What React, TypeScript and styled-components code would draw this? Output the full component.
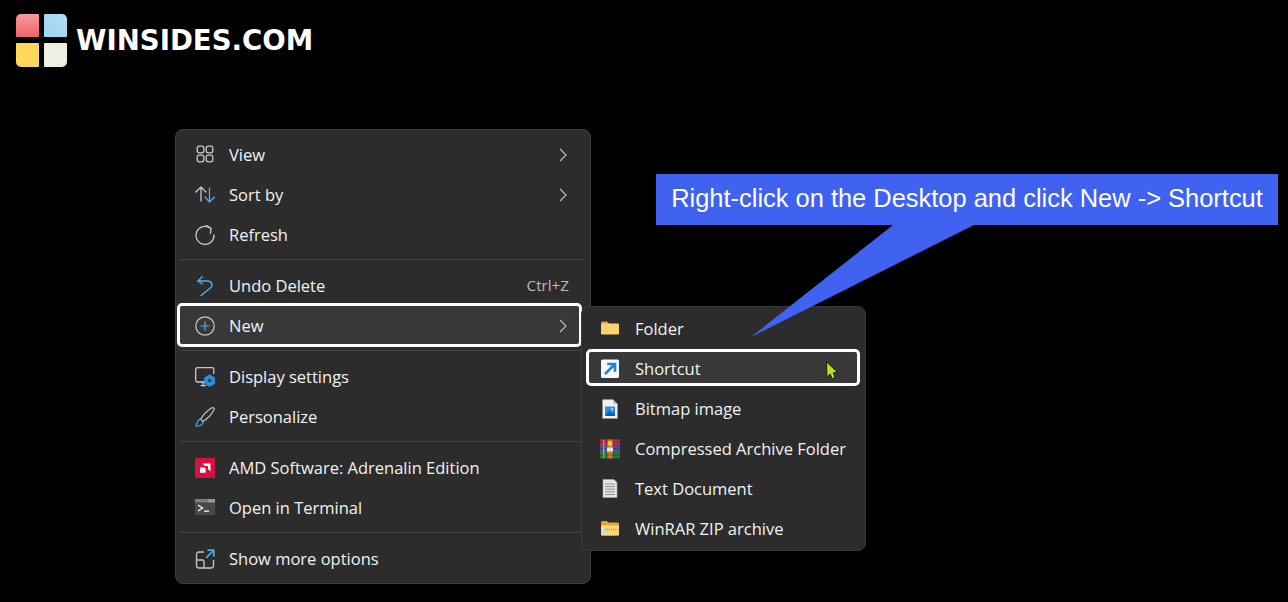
import React from 'react';
import styled, { createGlobalStyle } from 'styled-components';

const GlobalStyle = createGlobalStyle`
  html, body {
    margin: 0;
    background: #000;
  }
  * {
    box-sizing: border-box;
  }
`;

const GREY = '#c9c9c9';
const BLUE = '#4cb0e6';

const ViewIcon = () => (
  <svg width="20" height="20" viewBox="0 0 20 20" fill="none" stroke={GREY} strokeWidth="1.3">
    <rect x="2.2" y="1.2" width="6.6" height="6.6" rx="2" />
    <rect x="11.2" y="1.2" width="6.6" height="6.6" rx="2" />
    <rect x="2.2" y="10.2" width="6.6" height="6.6" rx="2" />
    <rect x="11.2" y="10.2" width="6.6" height="6.6" rx="2" />
  </svg>
);

const SortIcon = () => (
  <svg width="20" height="20" viewBox="0 0 20 20" fill="none" strokeWidth="1.3" strokeLinecap="round" strokeLinejoin="round">
    <path d="M0.8 7 L6 2 L11 7 M6 2 V16" stroke={GREY} />
    <path d="M10 12 L14.5 17 L19.5 12 M14.5 3 V17" stroke={BLUE} />
  </svg>
);

const RefreshIcon = () => (
  <svg width="20" height="20" viewBox="0 0 20 20" fill="none" stroke={GREY} strokeWidth="1.3" strokeLinecap="round" strokeLinejoin="round">
    <path d="M15.5 3.2 A9 9 0 1 0 19 10" />
    <path d="M11.5 0.6 L16 3.2 L15.5 8.3" stroke={GREY} />
  </svg>
);

const UndoIcon = () => (
  <svg width="20" height="20" viewBox="0 0 20 20" fill="none" stroke={BLUE} strokeWidth="1.4" strokeLinecap="round" strokeLinejoin="round">
    <path d="M7.2 0.8 L3 5 L7.5 8" />
    <path d="M3 5 H12.5 C16.5 5 18.5 9 15.5 12 L6 19.6" />
  </svg>
);

const NewIcon = () => (
  <svg width="20" height="20" viewBox="0 0 20 20" fill="none" strokeWidth="1.2" strokeLinecap="round">
    <circle cx="10" cy="10" r="9.2" stroke={GREY} />
    <path d="M10 5.8 V14.2 M5.8 10 H14.2" stroke={BLUE} />
  </svg>
);

const DisplayIcon = () => (
  <svg width="20" height="20" viewBox="0 0 20 20" fill="none">
    <path d="M11 15 H2.5 A1.8 1.8 0 0 1 0.7 13.2 V2.5 A1.8 1.8 0 0 1 2.5 0.7 H17 A1.8 1.8 0 0 1 18.8 2.5 V7" stroke={GREY} strokeWidth="1.3" />
    <path d="M6 18.6 H10.5 M8 15 V18.6" stroke={GREY} strokeWidth="1.3" strokeLinecap="round" />
    <circle cx="14.6" cy="13.6" r="3.9" stroke="#2a8fdc" strokeWidth="3.4" />
    <path d="M14.6 7.6 V19.6 M9.4 10.6 L19.8 16.6 M9.4 16.6 L19.8 10.6" stroke="#2a8fdc" strokeWidth="2" />
    <circle cx="14.6" cy="13.6" r="1.5" fill="#2c2c2c" />
  </svg>
);

const BrushIcon = () => (
  <svg width="20" height="20" viewBox="0 0 20 20" fill="none" strokeWidth="1.2" strokeLinejoin="round">
    <path d="M17 0.8 C18.3 0.2 19.6 1.4 19 2.8 C17 7 12 12 8 14.6 L5.6 12.2 C8 8.5 13 3 17 0.8 Z" stroke={GREY} />
    <path d="M5.4 12.2 C2.5 12.5 2.8 15.5 0.8 18.8 C4.5 19.6 8.2 18 8.2 15 Z" stroke={BLUE} />
  </svg>
);

const AmdIcon = () => (
  <svg width="20" height="20" viewBox="0 0 20 20">
    <rect width="20" height="20" fill="#d6103f" />
    <path d="M7.5 5.5 H15.5 V13.5 L13 11 V8 H10 Z" fill="#fff" />
    <path d="M9.3 9.3 L5 9.6 L5 14.8 H10.6 V10.8 Z" fill="#fff" />
  </svg>
);

const TerminalIcon = () => (
  <svg width="20" height="20" viewBox="0 0 20 20" fill="none">
    <rect y="1" width="20" height="16" fill="#484848" />
    <rect y="1" width="20" height="3.4" fill="#7d7d7d" />
    <rect x="13" y="1" width="7" height="3.4" fill="#999" />
    <path d="M3 7 L7.5 10 L3 13" stroke="#e8e8e8" strokeWidth="1.5" />
    <path d="M9 13.2 H14" stroke="#e8e8e8" strokeWidth="1.4" />
  </svg>
);

const MoreIcon = () => (
  <svg width="20" height="20" viewBox="0 0 20 20" fill="none" strokeWidth="1.3" strokeLinejoin="round">
    <path d="M9 3 H4 A2.5 2.5 0 0 0 1.5 5.5 V16.5 A2.5 2.5 0 0 0 4 19 H16 A2.5 2.5 0 0 0 18.5 16.5 V11" stroke={GREY} />
    <path d="M1.5 11 H7.5 A1.5 1.5 0 0 1 9 12.5 V19" stroke={GREY} />
    <path d="M11 9 L18.5 1.5 M12.5 1.2 H18.8 V7.5" stroke={BLUE} strokeWidth="1.7" />
  </svg>
);

const FolderIcon = () => (
  <svg width="20" height="20" viewBox="0 0 20 20">
    <path d="M1 4 A1.5 1.5 0 0 1 2.5 2.5 H7 L9.5 5 H1 Z" fill="#e2a93c" />
    <rect x="1" y="4.6" width="18" height="11" rx="1.4" fill="#fbd36e" />
  </svg>
);

const ShortcutIcon = () => (
  <svg width="20" height="20" viewBox="0 0 20 20" fill="none">
    <rect x="1" y="0.6" width="18" height="18.4" rx="1.6" fill="#f6f8fb" />
    <path d="M5 15 L14 6 M7.2 5 H15 V12.8" stroke="#1f86d8" strokeWidth="2.6" />
  </svg>
);

const BitmapIcon = () => (
  <svg width="20" height="20" viewBox="0 0 20 20">
    <path d="M2.5 0.5 H13 L17.5 5 V19.5 H2.5 Z" fill="#f0f2f5" />
    <path d="M13 0.5 V5 H17.5 Z" fill="#b9bec5" />
    <rect x="5" y="7.5" width="10" height="9.5" fill="#2f8fe6" />
    <path d="M5 17 L9 11.5 L12 14.5 L13.5 13 L15 15 V17 Z" fill="#0f5db5" />
    <circle cx="12" cy="10" r="1.2" fill="#a7d4fa" />
  </svg>
);

const ArchiveIcon = () => (
  <svg width="20" height="20" viewBox="0 0 20 20">
    <rect y="0.5" width="20" height="6.2" fill="#b02c4c" />
    <rect y="6.7" width="20" height="6.2" fill="#4f4fa8" />
    <rect y="12.9" width="20" height="6.4" fill="#1f7a3d" />
    <rect x="7.5" y="0.5" width="5" height="19" fill="#c9772d" />
    <path d="M0 3 H20 M0 9.5 H20 M0 16 H20" stroke="#000" strokeOpacity="0.25" />
    <rect x="3" y="0.5" width="1.5" height="19" fill="#d9b25a" opacity="0.7" />
    <rect x="7.6" y="2" width="4.8" height="5" rx="2" fill="#f3c33f" />
    <rect x="7" y="8.5" width="6" height="4" fill="#e9e4d4" />
  </svg>
);

const TextIcon = () => (
  <svg width="20" height="20" viewBox="0 0 20 20" fill="none">
    <path d="M3 0.5 H14 L17 3.5 V18.5 H3 Z" fill="#e6e6e6" stroke="#a8a8a8" strokeWidth="0.6" />
    <path d="M5 5 H15 M5 7.6 H15 M5 10.2 H15 M5 12.8 H15 M5 15.4 H15" stroke="#8d8d8d" strokeWidth="1" />
  </svg>
);

const ZipIcon = () => (
  <svg width="20" height="20" viewBox="0 0 20 20">
    <path d="M1 3.5 A1.5 1.5 0 0 1 2.5 2 H7 L9 4 H1 Z" fill="#d99e2e" />
    <rect x="1" y="3.6" width="18" height="12.8" rx="1.2" fill="#e0a93a" />
    <rect x="1" y="6.4" width="18" height="10" rx="1.2" fill="#fbd878" />
    <path d="M1 10.4 H19" stroke="#b9a77c" strokeWidth="2" strokeDasharray="1 1" />
    <rect x="1" y="8" width="4" height="6" fill="#d8d8d8" />
  </svg>
);

type Item = {
  label: string;
  icon: React.ReactNode;
  shortcut?: string;
  arrow?: boolean;
  active?: boolean;
};

const mainGroups: Item[][] = [
  [
    { label: 'View', icon: <ViewIcon />, arrow: true },
    { label: 'Sort by', icon: <SortIcon />, arrow: true },
    { label: 'Refresh', icon: <RefreshIcon /> },
  ],
  [
    { label: 'Undo Delete', icon: <UndoIcon />, shortcut: 'Ctrl+Z' },
    { label: 'New', icon: <NewIcon />, arrow: true, active: true },
  ],
  [
    { label: 'Display settings', icon: <DisplayIcon /> },
    { label: 'Personalize', icon: <BrushIcon /> },
  ],
  [
    { label: 'AMD Software: Adrenalin Edition', icon: <AmdIcon /> },
    { label: 'Open in Terminal', icon: <TerminalIcon /> },
  ],
  [{ label: 'Show more options', icon: <MoreIcon /> }],
];

const subItems: Item[] = [
  { label: 'Folder', icon: <FolderIcon /> },
  { label: 'Shortcut', icon: <ShortcutIcon />, active: true },
  { label: 'Bitmap image', icon: <BitmapIcon /> },
  { label: 'Compressed Archive Folder', icon: <ArchiveIcon /> },
  { label: 'Text Document', icon: <TextIcon /> },
  { label: 'WinRAR ZIP archive', icon: <ZipIcon /> },
];

export default function App() {
  return (
    <Page>
      <GlobalStyle />
      <Logo>
        <svg width="54" height="56" viewBox="0 0 54 56">
          <defs>
            <linearGradient id="logoRed" x1="0" y1="0" x2="0" y2="1">
              <stop offset="0" stopColor="#f79a9c" />
              <stop offset="1" stopColor="#ee6468" />
            </linearGradient>
            <linearGradient id="logoBlue" x1="0" y1="1" x2="1" y2="0">
              <stop offset="0" stopColor="#9ad6f2" />
              <stop offset="1" stopColor="#b4dcef" />
            </linearGradient>
          </defs>
          <path d="M6 1 H23 A1 1 0 0 1 24 2 V23 A1 1 0 0 1 23 24 H2 A1 1 0 0 1 1 23 V6 A5 5 0 0 1 6 1 Z" fill="url(#logoRed)" />
          <path d="M30 1 H47 A5 5 0 0 1 52 6 V23 A1 1 0 0 1 51 24 H30 A1 1 0 0 1 29 23 V2 A1 1 0 0 1 30 1 Z" fill="url(#logoBlue)" />
          <path d="M2 30 H23 A1 1 0 0 1 24 31 V53 A1 1 0 0 1 23 54 H6 A5 5 0 0 1 1 49 V31 A1 1 0 0 1 2 30 Z" fill="#fed85a" />
          <path d="M30 30 H51 A1 1 0 0 1 52 31 V49 A5 5 0 0 1 47 54 H30 A1 1 0 0 1 29 53 V31 A1 1 0 0 1 30 30 Z" fill="#eeeee2" />
        </svg>
        <LogoText>WINSIDES.COM</LogoText>
      </Logo>

      <MainMenu>
        {mainGroups.map((group, i) => (
          <Group key={i}>
            {group.map((item) => (
              <MainRow key={item.label} $active={item.active}>
                <IconBox $gap={14}>{item.icon}</IconBox>
                <Label>{item.label}</Label>
                {item.shortcut && <Shortcut>{item.shortcut}</Shortcut>}
                {item.arrow && (
                  <Chevron width="10" height="14" viewBox="0 0 10 14" fill="none" stroke="#bdbdbd" strokeWidth="1.2">
                    <path d="M2 1 L8 7 L2 13" />
                  </Chevron>
                )}
              </MainRow>
            ))}
          </Group>
        ))}
      </MainMenu>

      <SubMenu>
        {subItems.map((item) => (
          <SubRow key={item.label} $active={item.active}>
            <IconBox $gap={15}>{item.icon}</IconBox>
            <Label>{item.label}</Label>
            {item.active && (
              <Cursor width="14" height="19" viewBox="0 0 14 19">
                <path d="M1.5 0.8 L12.5 11.5 L8.2 11.8 L10 16.6 L7.2 17.8 L5.2 13 L2 16 Z" fill="#b4e61e" stroke="#1c2008" strokeWidth="1" />
              </Cursor>
            )}
          </SubRow>
        ))}
      </SubMenu>

      <Callout>
        <CalloutText>Right-click on the Desktop and click New -&gt; Shortcut</CalloutText>
        <CalloutTail width="223" height="112" viewBox="0 0 223 112">
          <path d="M142 0 H223 L0 112 Z" fill="#3f62f0" />
        </CalloutTail>
      </Callout>
    </Page>
  );
}

const Page = styled.div`
  position: relative;
  width: 1288px;
  height: 602px;
  overflow: hidden;
  background: #000;
  font-family: 'Open Sans', 'Noto Sans', sans-serif;
`;

const Logo = styled.div`
  display: flex;
  align-items: center;
  gap: 7px;
  padding: 13px 0 0 15px;
`;

const LogoText = styled.span`
  margin-top: -2px;
  font-family: 'DejaVu Sans', sans-serif;
  font-size: 27.6px;
  font-weight: 700;
  color: #fff;
`;

const MainMenu = styled.div`
  position: absolute;
  left: 175px;
  top: 129px;
  width: 416px;
  height: 455px;
  padding: 5px 4px 4px;
  background: #2c2c2c;
  border: 1px solid #3e3e3e;
  border-radius: 8px;
`;

const Group = styled.div`
  & + & {
    position: relative;
    margin-top: 11px;
  }
  & + &::before {
    content: '';
    position: absolute;
    top: -7px;
    left: 0;
    right: 0;
    height: 1px;
    background: #404040;
  }
`;

const MainRow = styled.div<{ $active?: boolean }>`
  position: relative;
  isolation: isolate;
  display: flex;
  align-items: center;
  height: 40px;
  padding: 0 18px 0 15px;
  ${({ $active }) =>
    $active &&
    `
    &::after {
      content: '';
      position: absolute;
      z-index: -1;
      inset: -3px 4px -1px -3px;
      background: #383838;
      border: 3px solid #fff;
      border-radius: 5px;
    }
  `}
`;

const SubMenu = styled.div`
  position: absolute;
  left: 581px;
  top: 306px;
  width: 285px;
  height: 245px;
  padding: 2px 8px;
  background: #2c2c2c;
  border: 1px solid #3a3a3a;
  border-radius: 8px;
`;

const SubRow = styled.div<{ $active?: boolean }>`
  position: relative;
  isolation: isolate;
  display: flex;
  align-items: center;
  height: 40px;
  padding-left: 10px;
  ${({ $active }) =>
    $active &&
    `
    &::after {
      content: '';
      position: absolute;
      z-index: -1;
      inset: 0 -3px 3px -4px;
      background: #383838;
      border: 3px solid #fff;
      border-radius: 5px;
    }
  `}
`;

const IconBox = styled.span<{ $gap: number }>`
  display: flex;
  flex-shrink: 0;
  width: 20px;
  height: 20px;
  margin-right: ${({ $gap }) => $gap}px;
`;

const Label = styled.span`
  flex: 1;
  padding-bottom: 2px;
  font-size: 16.5px;
  color: #f2f2f2;
  white-space: nowrap;
`;

const Shortcut = styled.span`
  padding-bottom: 2px;
  margin-right: -1px;
  font-size: 15.2px;
  color: #bcbcbc;
`;

const Chevron = styled.svg`
  flex-shrink: 0;
`;

const Cursor = styled.svg`
  position: absolute;
  left: 235px;
  top: 12px;
`;

const Callout = styled.div`
  position: absolute;
  left: 656px;
  top: 174px;
  width: 622px;
  height: 51px;
  display: flex;
  align-items: center;
  justify-content: center;
  padding-bottom: 2px;
  background: #3f62f0;
`;

const CalloutText = styled.span`
  font-family: 'Liberation Sans', Arial, sans-serif;
  font-size: 25.45px;
  color: #fff;
  white-space: nowrap;
`;

const CalloutTail = styled.svg`
  position: absolute;
  left: 95px;
  top: 51px;
`;
